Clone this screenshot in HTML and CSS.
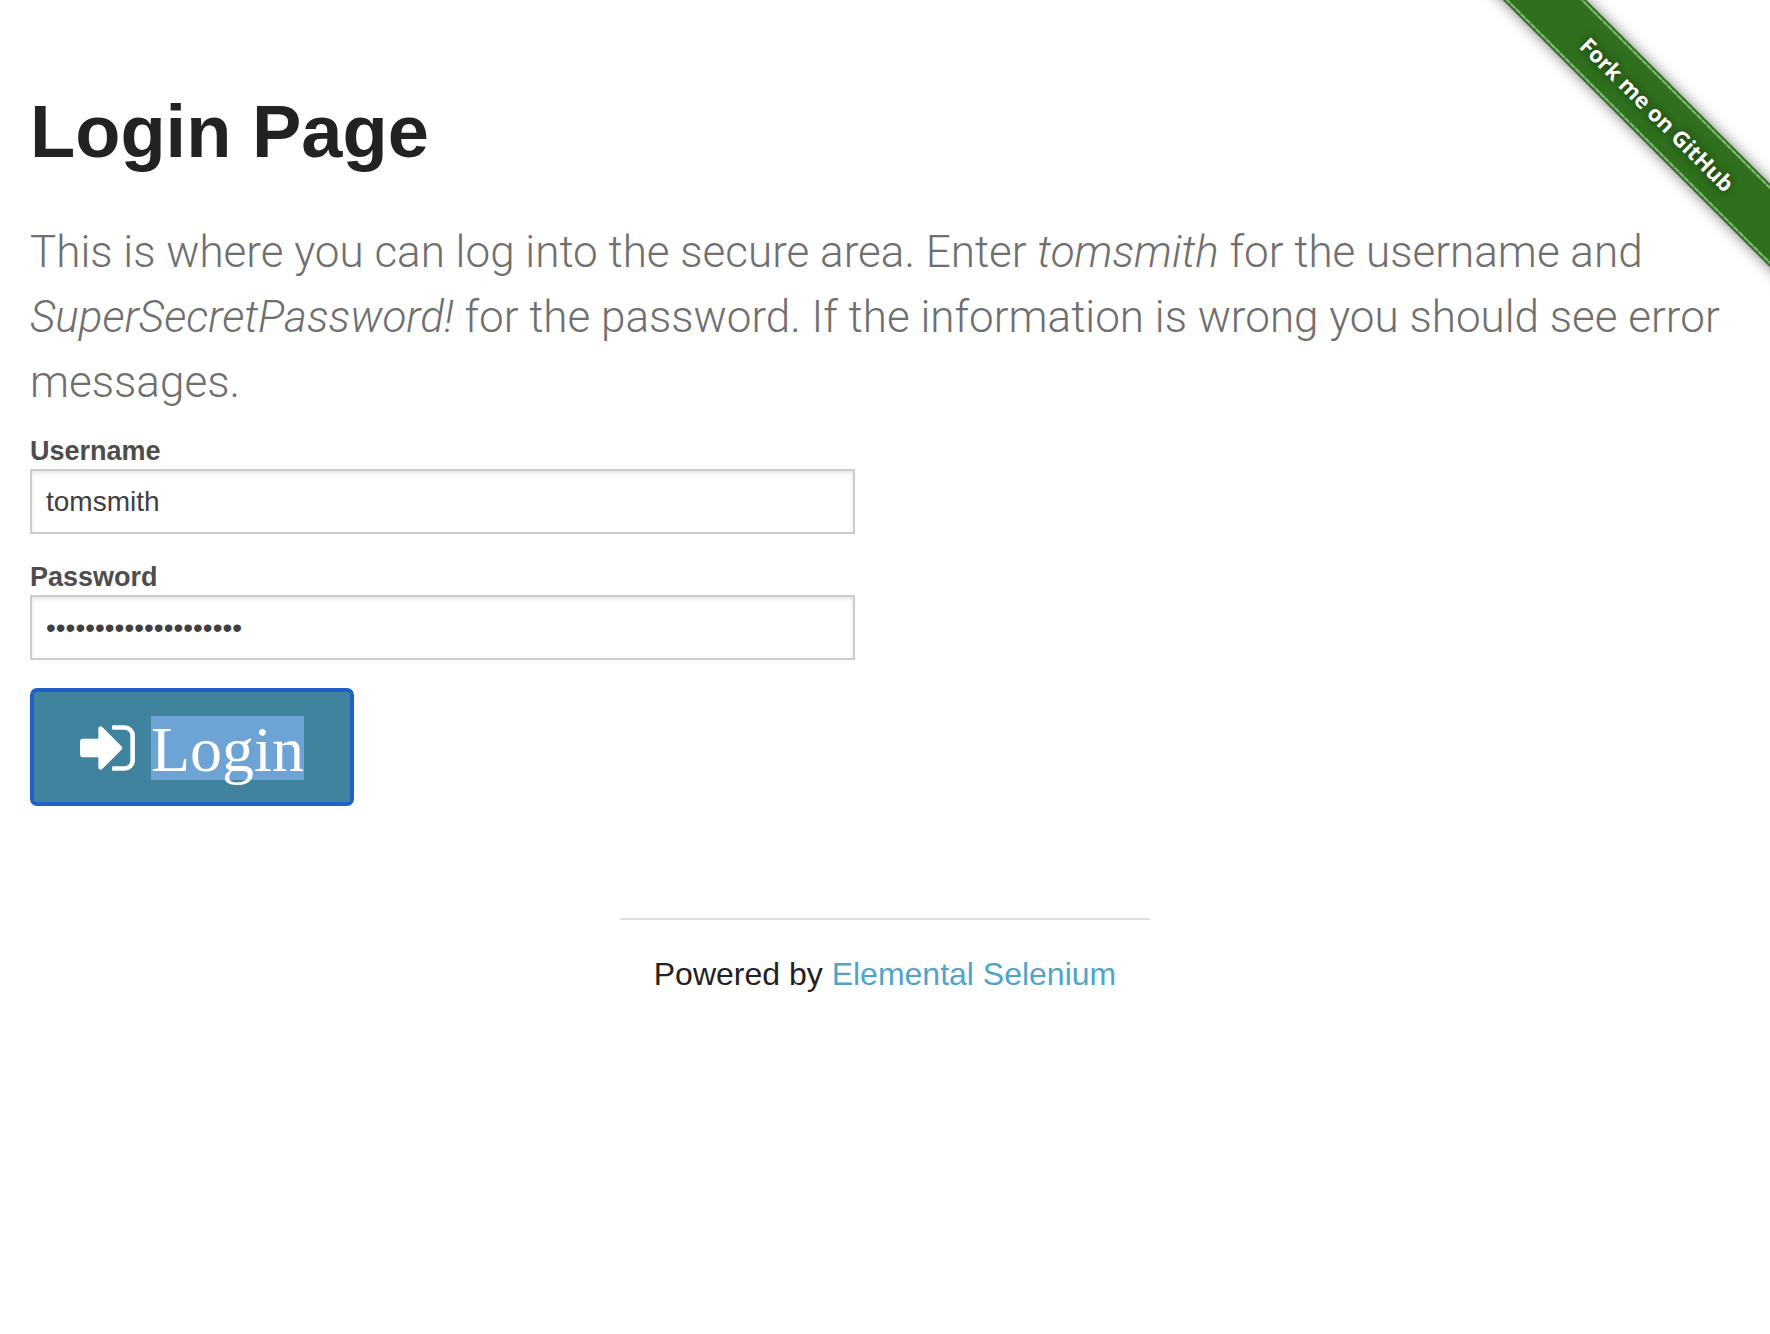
FILE: index.html
```html
<!DOCTYPE html>
<html lang="en">
<head>
  <meta charset="utf-8">
  <meta name="viewport" content="width=device-width, initial-scale=1">
  <title>The Internet</title>
  <link rel="stylesheet" href="styles.css">
</head>
<body>
  <a class="ribbon" href="#fork"><span class="ribbon-band">Fork me on GitHub</span></a>

  <main class="content">
    <h1 class="title">Login Page</h1>
    <p class="subheader">This is where you can log into the secure area. Enter <em>tomsmith</em> for the username and <em>SuperSecretPassword!</em> for the password. If the information is wrong you should see error messages.</p>

    <form class="login">
      <div class="field">
        <label class="label" for="username">Username</label>
        <input class="input" type="text" id="username" name="username" value="tomsmith">
      </div>
      <div class="field">
        <label class="label" for="password">Password</label>
        <input class="input" type="password" id="password" name="password" value="SuperSecretPassword!">
      </div>
      <button class="submit" type="button">
        <svg class="submit-icon" viewBox="0 0 1536 1792" aria-hidden="true"><path fill="currentColor" d="M1184 896q0 26-19 45l-544 544q-19 19-45 19t-45-19-19-45v-288h-448q-26 0-45-19t-19-45v-384q0-26 19-45t45-19h448v-288q0-26 19-45t45-19 45 19l544 544q19 19 19 45zm352-352v704q0 119-84.500 203.500t-203.500 84.500h-320q-13 0-22.500-9.500t-9.500-22.500q0-4-1-20t-.5-26.500 3-23.500 10-19.500 20.500-6.500h320q66 0 113-47t47-113v-704q0-66-47-113t-113-47h-312l-11.500-1-11.500-3-8-5.500-7-9-2-13.500q0-4-1-20t-.5-26.500 3-23.500 10-19.500 20.500-6.500h320q119 0 203.500 84.500t84.500 203.500z"/></svg>
        <span class="submit-text">Login</span>
      </button>
    </form>
  </main>

  <footer class="footer">
    <hr class="rule">
    <p class="credit">Powered by <a class="link" href="#elemental-selenium">Elemental Selenium</a></p>
  </footer>
</body>
</html>
```

FILE: styles.css
```css
* {
  box-sizing: border-box;
}

body {
  margin: 0;
  position: relative;
  background: #fff;
  color: #222;
  font-family: "Liberation Sans", Arial, sans-serif;
  font-size: 32px;
}

.ribbon {
  position: absolute;
  top: 0;
  right: 0;
  width: 300px;
  height: 300px;
  overflow: hidden;
  pointer-events: none;
}

.ribbon-band {
  position: absolute;
  top: 82px;
  left: -34px;
  width: 440px;
  height: 59px;
  padding-left: 6px;
  transform: rotate(45deg);
  background:
    repeating-linear-gradient(90deg, #84bb7c 0 5px, #64a25a 5px 7px) 0 2px / 100% 2px no-repeat,
    repeating-linear-gradient(90deg, #84bb7c 0 5px, #64a25a 5px 7px) 0 55px / 100% 2px no-repeat,
    #2f6f1d;
  box-shadow: 0 0 14px rgba(0, 0, 0, 0.5);
  color: #fff;
  font: 700 22px/60px "Open Sans", sans-serif;
  text-align: center;
  text-shadow: 0 0 8px rgba(0, 0, 0, 0.6);
  pointer-events: auto;
}

.content {
  padding: 88px 30px 0;
}

.title {
  margin: 0;
  font-size: 74px;
  line-height: 88px;
}

.subheader {
  margin: 44px 0 21px;
  color: #6f6f6f;
  font-family: Roboto, "Liberation Sans", sans-serif;
  font-size: 44px;
  font-weight: 300;
  line-height: 65px;
}

.login {
  width: 50%;
  padding-right: 30px;
}

.field {
  margin-bottom: 28px;
}

.label {
  display: block;
  margin-bottom: 2px;
  color: #4d4d4d;
  font-size: 27px;
  font-weight: 700;
  line-height: 31px;
}

.input {
  display: block;
  width: 100%;
  height: 65px;
  padding: 0 14px;
  border: 2px solid #ccc;
  border-radius: 0;
  background: #fff;
  box-shadow: inset 0 2px 4px rgba(0, 0, 0, 0.1);
  color: #404040;
  font: 28px "Liberation Sans", Arial, sans-serif;
}

.submit {
  display: flex;
  gap: 16px;
  padding: 24px 46px 22px;
  border: 4px solid #2061c8;
  border-radius: 7px;
  background: #40839e;
  color: #fff;
  font: 64px/67px "Liberation Serif", "Times New Roman", serif;
}

.submit-icon {
  width: 55px;
  height: 64px;
}

.submit-text {
  height: 64px;
  background: #6da4d5;
}

.footer {
  width: 33.333%;
  margin: 112px auto 0;
  padding: 0 30px;
}

.rule {
  height: 2px;
  margin: 0 0 32px;
  border: 0;
  background: #ddd;
}

.credit {
  margin: 0;
  line-height: 44px;
  text-align: center;
  white-space: nowrap;
}

.link {
  color: #51a4c9;
  text-decoration: none;
}
```
